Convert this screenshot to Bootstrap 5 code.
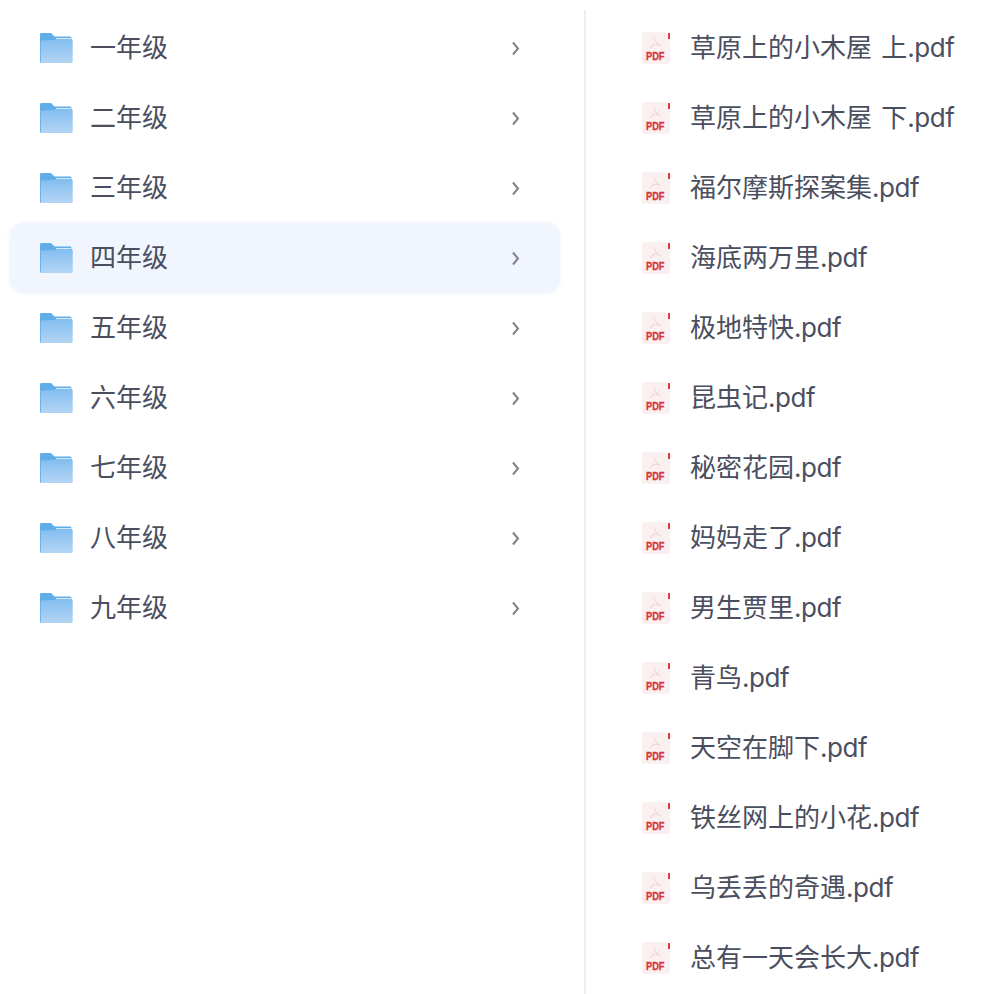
<!DOCTYPE html>
<html lang="zh-CN">
<head>
  <meta charset="UTF-8">
  <title>书单</title>
  <link href="https://cdn.jsdelivr.net/npm/bootstrap@5.3.3/dist/css/bootstrap.min.css" rel="stylesheet">
  <style>
    html, body {
      height: 994px;
      overflow: hidden;
      background: #fff;
    }
    body {
      font-family: Inter, "Noto Sans CJK SC", sans-serif;
      font-size: 26px;
      color: #4b4e5e;
    }
    .shelf {
      height: 994px;
    }
    .grades {
      width: 584px;
      padding: 13px 24px 0 10px;
    }
    .books {
      width: 418px;
      margin-top: 10px;
      padding: 3px 0 0 55px;
      border-left: 2px solid #eeeef0;
      background: #fff;
    }
    .line-row {
      height: 70px;
      white-space: nowrap;
    }
    .grades .line-row {
      padding-left: 29px;
      padding-right: 40px;
      border-radius: 14px;
    }
    .line-row.picked {
      background: #f1f5fe;
      box-shadow: 0 0 4px rgba(230, 237, 252, .7);
    }
    .line-text {
      margin-bottom: 1px;
      word-spacing: 2px;
    }
    .ext {
      letter-spacing: -.45px;
    }
    .folder-ico {
      width: 34px;
      height: 32px;
      margin-right: 17px;
      flex: none;
    }
    .pdf-ico {
      width: 30px;
      height: 36px;
      margin-right: 19px;
      flex: none;
    }
    .chev {
      width: 9px;
      height: 15px;
      flex: none;
    }
  </style>
</head>
<body>

  <svg width="0" height="0" class="d-block">
    <defs>
      <linearGradient id="folderFront" x1="0" y1="0" x2="0" y2="1">
        <stop offset="0" stop-color="#82bdf0"/>
        <stop offset="1" stop-color="#b4d5f5"/>
      </linearGradient>
      <symbol id="folder" viewBox="0 0 34 32">
        <path d="M1 2.500C1 1.600 1.600 1 2.500 1H12l3.500 3.500H31c.9 0 1.500.6 1.500 1.500V10H1z" fill="#5fade9"/>
        <rect x="17" y="6" width="15" height="1.500" fill="#d6e8f8"/>
        <path d="M1 8.500l14.500-.5 1.500-1H32c1 0 1.700.7 1.700 1.700V29.500c0 1-.7 1.500-1.500 1.500H2.500C1.600 31 1 30.400 1 29.500z" fill="url(#folderFront)"/>
        <rect x="1" y="8" width="1" height="22.500" fill="#6fb2ea"/>
      </symbol>
      <symbol id="pdf" viewBox="0 0 30 36">
        <path d="M3 2h21l5 4v26c0 1-.8 2-2 2H3c-1 0-2-1-2-2V4c0-1 1-2 2-2z" fill="#fbf0f0"/>
        <rect x="27" y="3" width="2" height="6" fill="#e23b3b"/>
        <path d="M13 7c1 5 3 7 7 9M13 14l-4 4M13 14l6 1" stroke="#f0d6d6" stroke-width="1.200" fill="none"/>
        <text x="5" y="30" font-family="'Liberation Sans', sans-serif" font-size="11.500" font-weight="700" fill="#d8343a" stroke="#d8343a" stroke-width=".3" textLength="18.500" lengthAdjust="spacingAndGlyphs">PDF</text>
      </symbol>
      <symbol id="chevron" viewBox="0 0 9 15">
        <path d="M2 1.500l5 6-5 6" stroke="#7f818b" stroke-width="2" fill="none"/>
      </symbol>
    </defs>
  </svg>

  <div class="shelf d-flex">
    <div class="grades">
      <div class="line-row d-flex align-items-center"><svg class="folder-ico"><use href="#folder"/></svg><span class="line-text flex-grow-1">一年级</span><svg class="chev"><use href="#chevron"/></svg></div>
      <div class="line-row d-flex align-items-center"><svg class="folder-ico"><use href="#folder"/></svg><span class="line-text flex-grow-1">二年级</span><svg class="chev"><use href="#chevron"/></svg></div>
      <div class="line-row d-flex align-items-center"><svg class="folder-ico"><use href="#folder"/></svg><span class="line-text flex-grow-1">三年级</span><svg class="chev"><use href="#chevron"/></svg></div>
      <div class="line-row picked d-flex align-items-center"><svg class="folder-ico"><use href="#folder"/></svg><span class="line-text flex-grow-1">四年级</span><svg class="chev"><use href="#chevron"/></svg></div>
      <div class="line-row d-flex align-items-center"><svg class="folder-ico"><use href="#folder"/></svg><span class="line-text flex-grow-1">五年级</span><svg class="chev"><use href="#chevron"/></svg></div>
      <div class="line-row d-flex align-items-center"><svg class="folder-ico"><use href="#folder"/></svg><span class="line-text flex-grow-1">六年级</span><svg class="chev"><use href="#chevron"/></svg></div>
      <div class="line-row d-flex align-items-center"><svg class="folder-ico"><use href="#folder"/></svg><span class="line-text flex-grow-1">七年级</span><svg class="chev"><use href="#chevron"/></svg></div>
      <div class="line-row d-flex align-items-center"><svg class="folder-ico"><use href="#folder"/></svg><span class="line-text flex-grow-1">八年级</span><svg class="chev"><use href="#chevron"/></svg></div>
      <div class="line-row d-flex align-items-center"><svg class="folder-ico"><use href="#folder"/></svg><span class="line-text flex-grow-1">九年级</span><svg class="chev"><use href="#chevron"/></svg></div>
    </div>
    <div class="books">
      <div class="line-row d-flex align-items-center"><svg class="pdf-ico"><use href="#pdf"/></svg><span class="line-text">草原上的小木屋&nbsp;上<span class="ext">.pdf</span></span></div>
      <div class="line-row d-flex align-items-center"><svg class="pdf-ico"><use href="#pdf"/></svg><span class="line-text">草原上的小木屋&nbsp;下<span class="ext">.pdf</span></span></div>
      <div class="line-row d-flex align-items-center"><svg class="pdf-ico"><use href="#pdf"/></svg><span class="line-text">福尔摩斯探案集<span class="ext">.pdf</span></span></div>
      <div class="line-row d-flex align-items-center"><svg class="pdf-ico"><use href="#pdf"/></svg><span class="line-text">海底两万里<span class="ext">.pdf</span></span></div>
      <div class="line-row d-flex align-items-center"><svg class="pdf-ico"><use href="#pdf"/></svg><span class="line-text">极地特快<span class="ext">.pdf</span></span></div>
      <div class="line-row d-flex align-items-center"><svg class="pdf-ico"><use href="#pdf"/></svg><span class="line-text">昆虫记<span class="ext">.pdf</span></span></div>
      <div class="line-row d-flex align-items-center"><svg class="pdf-ico"><use href="#pdf"/></svg><span class="line-text">秘密花园<span class="ext">.pdf</span></span></div>
      <div class="line-row d-flex align-items-center"><svg class="pdf-ico"><use href="#pdf"/></svg><span class="line-text">妈妈走了<span class="ext">.pdf</span></span></div>
      <div class="line-row d-flex align-items-center"><svg class="pdf-ico"><use href="#pdf"/></svg><span class="line-text">男生贾里<span class="ext">.pdf</span></span></div>
      <div class="line-row d-flex align-items-center"><svg class="pdf-ico"><use href="#pdf"/></svg><span class="line-text">青鸟<span class="ext">.pdf</span></span></div>
      <div class="line-row d-flex align-items-center"><svg class="pdf-ico"><use href="#pdf"/></svg><span class="line-text">天空在脚下<span class="ext">.pdf</span></span></div>
      <div class="line-row d-flex align-items-center"><svg class="pdf-ico"><use href="#pdf"/></svg><span class="line-text">铁丝网上的小花<span class="ext">.pdf</span></span></div>
      <div class="line-row d-flex align-items-center"><svg class="pdf-ico"><use href="#pdf"/></svg><span class="line-text">乌丢丢的奇遇<span class="ext">.pdf</span></span></div>
      <div class="line-row d-flex align-items-center"><svg class="pdf-ico"><use href="#pdf"/></svg><span class="line-text">总有一天会长大<span class="ext">.pdf</span></span></div>
    </div>
  </div>

  <script src="https://cdn.jsdelivr.net/npm/bootstrap@5.3.3/dist/js/bootstrap.bundle.min.js"></script>
</body>
</html>
